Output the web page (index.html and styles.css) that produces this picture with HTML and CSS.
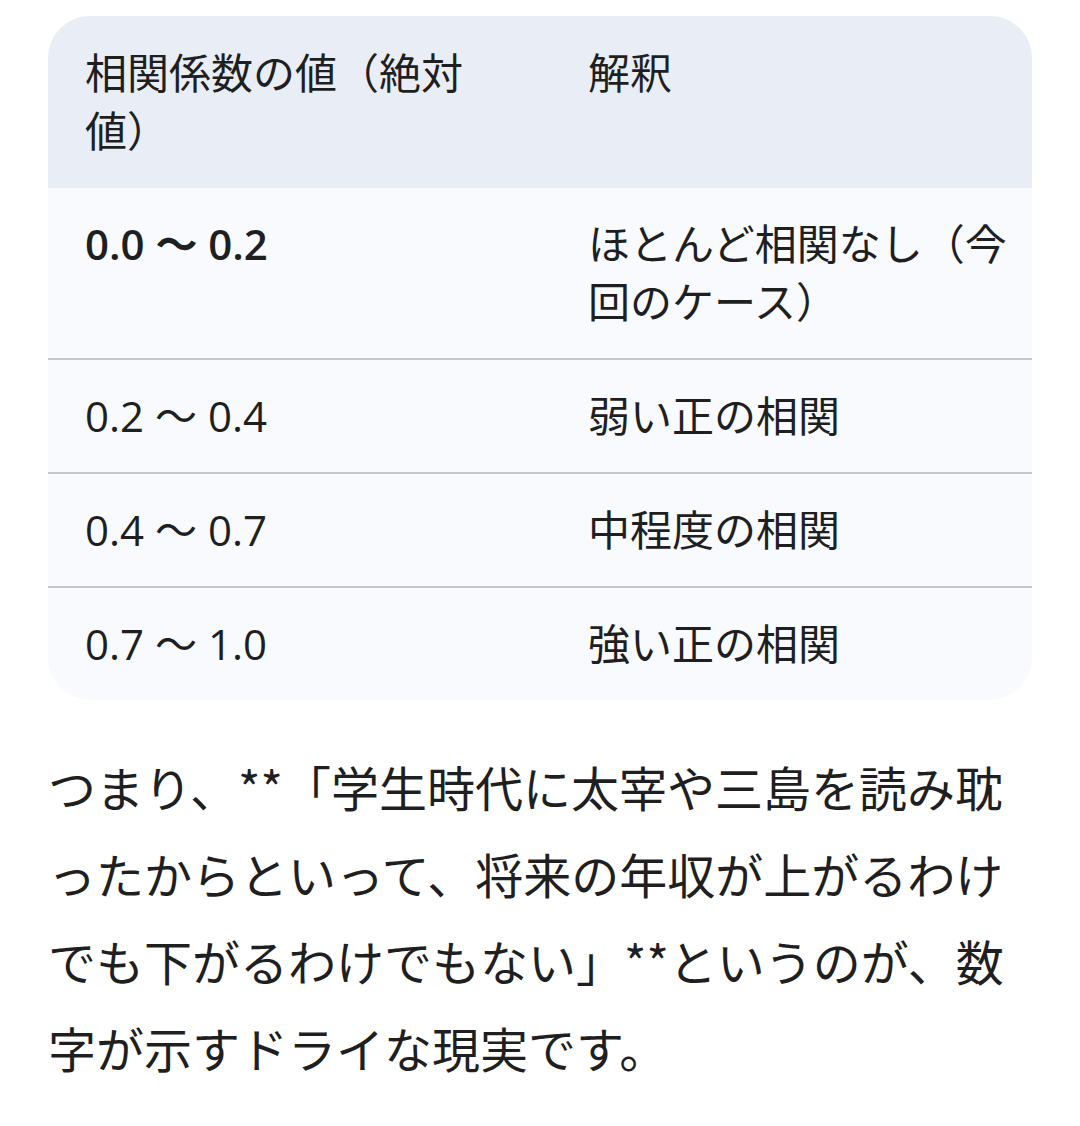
FILE: index.html
```html
<!DOCTYPE html>
<html lang="ja">
<head>
<meta charset="utf-8">
<link rel="stylesheet" href="styles.css">
</head>
<body>
<div class="page">
  <div class="table-wrap">
    <table class="corr">
      <thead>
        <tr>
          <th class="c1">相関係数の値（絶対値）</th>
          <th class="c2">解釈</th>
        </tr>
      </thead>
      <tbody>
        <tr>
          <td class="c1"><strong>0.0 〜 0.2</strong></td>
          <td class="c2">ほとんど相関なし（今回のケース）</td>
        </tr>
        <tr>
          <td class="c1">0.2 〜 0.4</td>
          <td class="c2">弱い正の相関</td>
        </tr>
        <tr>
          <td class="c1">0.4 〜 0.7</td>
          <td class="c2">中程度の相関</td>
        </tr>
        <tr>
          <td class="c1">0.7 〜 1.0</td>
          <td class="c2">強い正の相関</td>
        </tr>
      </tbody>
    </table>
  </div>
  <p class="summary">つまり、**「学生時代に太宰や三島を読み耽ったからといって、将来の年収が上がるわけでも下がるわけでもない」**というのが、数字が示すドライな現実です。</p>
</div>
</body>
</html>
```

FILE: styles.css
```css
html, body {
  margin: 0;
  padding: 0;
  background: #ffffff;
}

body {
  font-family: "Open Sans", "Noto Sans CJK JP", sans-serif;
  color: #1f1f1f;
}

.page {
  padding: 16px 48px 0 48px;
  width: 984px;
}

.table-wrap {
  border-radius: 42px;
  overflow: hidden;
  background: #f8fafd;
}

.corr {
  width: 984px;
  border-collapse: separate;
  border-spacing: 0;
  table-layout: fixed;
  font-size: 42px;
  line-height: 58px;
}

.corr th,
.corr td {
  text-align: left;
  vertical-align: top;
  padding: 27px 16px 27px 37px;
  font-weight: 400;
}

.corr th {
  background: #e9eef6;
  padding-top: 28px;
  padding-bottom: 28px;
}

.corr th.c1,
.corr td.c1 {
  width: 386px;
  padding-right: 80px;
}

.corr tbody tr + tr td {
  border-top: 2px solid #c4c7c5;
}

.corr strong {
  font-weight: 600;
}

.summary {
  margin: 43px 0 0 0;
  font-size: 48px;
  line-height: 87px;
  font-family: "Noto Sans CJK JP", sans-serif;
}
```
